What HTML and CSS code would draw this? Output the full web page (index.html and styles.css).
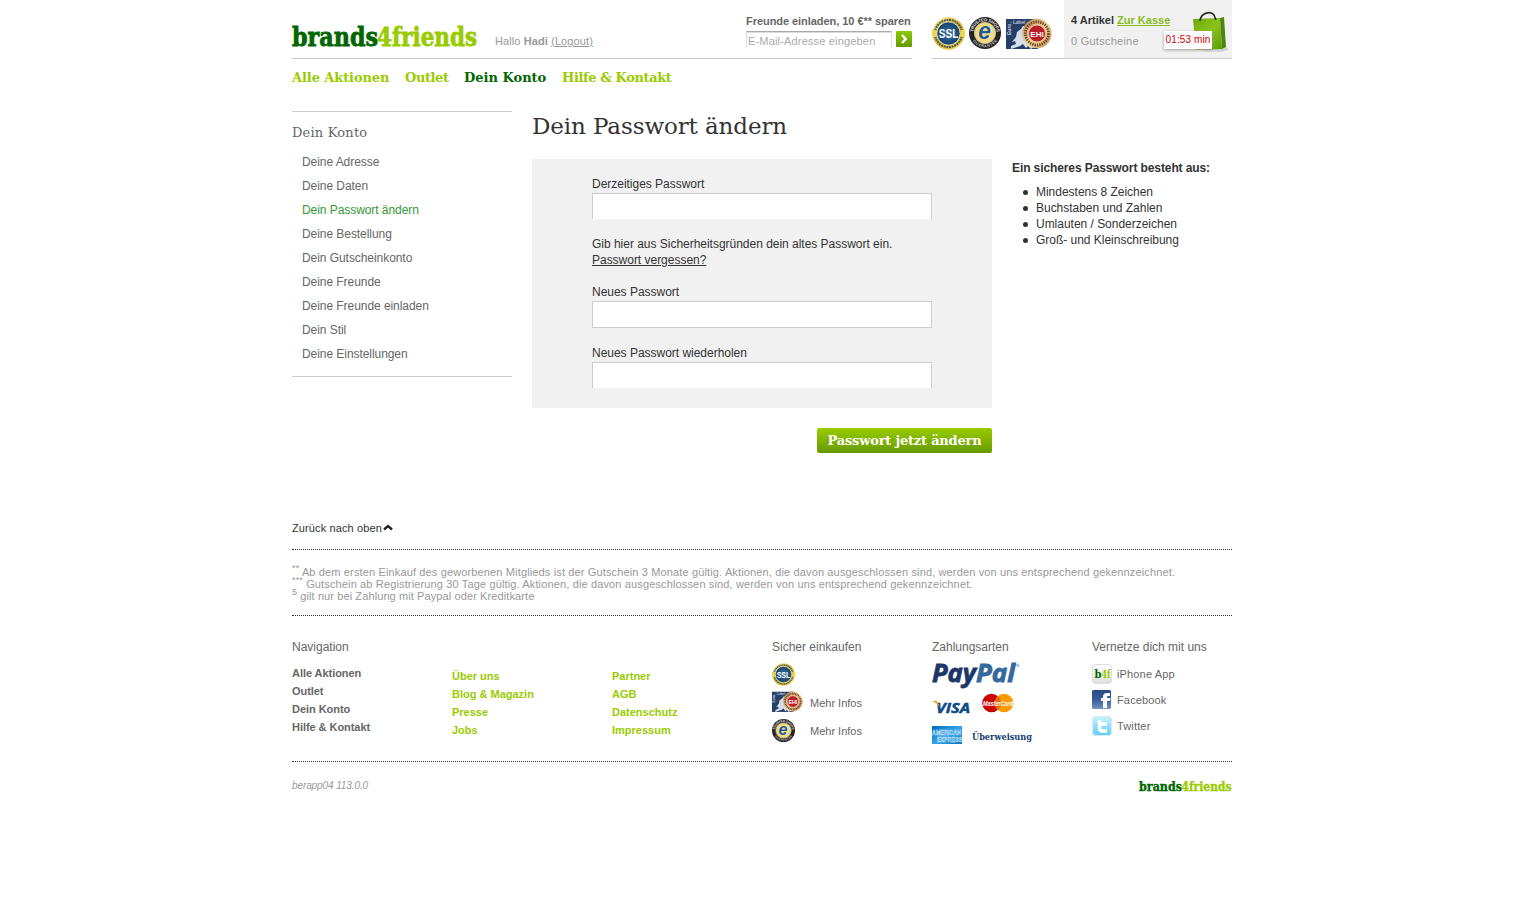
FILE: index.html
```html
<!DOCTYPE html>
<html lang="de">
<head>
<meta charset="utf-8">
<title>brands4friends - Dein Passwort ändern</title>
<link rel="stylesheet" href="styles.css">
</head>
<body>
<svg class="defs" aria-hidden="true">
  <defs>
    <linearGradient id="gold" x1="0" y1="0" x2="1" y2="1"><stop offset="0" stop-color="#fff3b0"/><stop offset=".5" stop-color="#e3b92c"/><stop offset="1" stop-color="#f4d860"/></linearGradient>
    <linearGradient id="copper" x1="0" y1="0" x2="1" y2="1"><stop offset="0" stop-color="#b9783f"/><stop offset=".5" stop-color="#f6dca4"/><stop offset="1" stop-color="#c58a4d"/></linearGradient>
    <radialGradient id="blue"><stop offset="0" stop-color="#3c78a8"/><stop offset="1" stop-color="#153f6b"/></radialGradient>
    <linearGradient id="bagfill" x1="0" y1="0" x2="1" y2="1"><stop offset="0" stop-color="#6fa80c"/><stop offset=".5" stop-color="#8ac41a"/><stop offset="1" stop-color="#5c9a00"/></linearGradient>
    <linearGradient id="amexfill" x1="0" y1="0" x2="1" y2="1"><stop offset="0" stop-color="#0068b8"/><stop offset=".5" stop-color="#35a4ea"/><stop offset="1" stop-color="#0872c0"/></linearGradient>
    <linearGradient id="fbfill" x1="0" y1="0" x2="0" y2="1"><stop offset="0" stop-color="#264a87"/><stop offset=".5" stop-color="#355c9c"/><stop offset="1" stop-color="#7591bf"/></linearGradient>
    <linearGradient id="twfill" x1="0" y1="0" x2="0" y2="1"><stop offset="0" stop-color="#c9f1ff"/><stop offset="1" stop-color="#62cdf5"/></linearGradient>
    <linearGradient id="appfill" x1="0" y1="0" x2="0" y2="1"><stop offset="0" stop-color="#ffffff"/><stop offset="1" stop-color="#dedede"/></linearGradient>
    <symbol id="ssl" viewBox="0 0 32 32">
      <circle cx="16" cy="16" r="15.7" fill="url(#gold)"/>
      <circle cx="16" cy="16" r="13.2" fill="none" stroke="#4a5a52" stroke-width="2" stroke-dasharray="1.9 .7"/>
      <path d="M2 12.5v7M30 12.5v7" stroke="#f3d44f" stroke-width="4"/>
      <circle cx="16" cy="16" r="11.3" fill="url(#blue)" stroke="#f7efbd" stroke-width=".8"/>
      <text x="16" y="20.5" text-anchor="middle" textLength="19" lengthAdjust="spacingAndGlyphs" font-size="13" font-weight="bold" fill="#fff">SSL</text>
    </symbol>
    <symbol id="trusted" viewBox="0 0 32 32">
      <circle cx="16" cy="16" r="16" fill="#242424"/>
      <path id="arcTop" d="M4.2 16a11.8 11.8 0 0 1 23.6 0" fill="none"/>
      <path id="arcBottom" d="M1.6 16a14.4 14.4 0 0 0 28.8 0" fill="none"/>
      <text font-size="4.5" font-weight="bold" fill="#ddd"><textPath href="#arcTop" startOffset="1" textLength="35">TRUSTED SHOPS</textPath></text>
      <text font-size="4" font-weight="bold" fill="#bbb"><textPath href="#arcBottom" startOffset="8" textLength="29">GUARANTEE</textPath></text>
      <circle cx="16" cy="16" r="10.6" fill="#f1dc82" stroke="#c9bd91"/>
      <text x="16.6" y="22" text-anchor="middle" font-size="24" font-style="italic" font-weight="bold" fill="#fff">e</text>
      <text x="15.6" y="21.6" text-anchor="middle" font-size="23" font-style="italic" font-weight="bold" fill="#265a8e">e</text>
    </symbol>
    <symbol id="ehi" viewBox="0 0 46 31">
      <rect y="1" width="32" height="30" fill="#263f69"/>
      <path d="M5 31v-3l5-2-1-3-3 1 4-5 1-5 4-3 2-3 3 0-1 4 4 2 2 5 3 3-3 1 3 6-3 2-3-3-2 2-3-4-3 2-3 1z" fill="#d4dde8"/>
      <text x="4" y="5.5" font-size="5" fill="#dfe5ed">- Label -</text>
      <text transform="translate(4.8 17) rotate(-90)" font-size="5" font-weight="bold" fill="#c3ccdb">Euro</text>
      <circle cx="31" cy="15.5" r="14.7" fill="url(#copper)"/>
      <circle cx="31" cy="15.5" r="11.6" fill="none" stroke="#6b4028" stroke-width="2.8" stroke-dasharray="1.4 1"/>
      <circle cx="31" cy="15.5" r="8.5" fill="#b91e29" stroke="#f2c5a3"/>
      <text x="31" y="18.5" text-anchor="middle" font-size="8" font-weight="bold" fill="#fff">EHI</text>
    </symbol>
    <symbol id="logo" viewBox="0 0 186 26">
      <text y="20.7" font-size="26" textLength="86" lengthAdjust="spacingAndGlyphs" fill="#060" stroke="#060" stroke-width=".8">brands</text>
      <text x="85" y="20.7" font-size="26" textLength="100" lengthAdjust="spacingAndGlyphs" fill="#9c0" stroke="#9c0" stroke-width=".8">4friends</text>
    </symbol>
  </defs>
</svg>
<div class="page">
  <header class="header">
    <div class="header-main">
      <svg class="logo"><use href="#logo"/></svg>
      <div class="greeting">Hallo <b>Hadi</b> <a href="#">(Logout)</a></div>
      <form class="invite">
        <label for="mail">Freunde einladen, 10 €** sparen</label>
        <div class="invite-row">
          <input id="mail" type="text" placeholder="E-Mail-Adresse eingeben">
          <button type="button" aria-label="Senden"><svg width="16" height="16" viewBox="0 0 16 16"><path d="M6 4l3.7 4L6 12" fill="none" stroke="#fff" stroke-width="2.5"/></svg></button>
        </div>
      </form>
    </div>
    <div class="header-side">
      <div class="seals">
        <svg width="33" height="33"><use href="#ssl"/></svg>
        <svg width="32" height="32"><use href="#trusted"/></svg>
        <svg width="46" height="31"><use href="#ehi"/></svg>
      </div>
      <div class="cart">
        <div class="cart-line"><b>4 Artikel</b> <a href="#">Zur Kasse</a></div>
        <div class="cart-coupons">0 Gutscheine</div>
        <svg class="bag" width="36" height="40" viewBox="0 0 36 40"><path d="M33 35l3 3-8 2-20-1z" fill="#d2d2d2"/><path d="M0 7l27-1 2 31-26 1z" fill="url(#bagfill)"/><path d="M27 6l4-1 2 30-4 2z" fill="#4c8510"/><path d="M7 9C8 0 18-1 21 3l2 5" fill="none" stroke="#262b20" stroke-width="1.6"/></svg>
        <div class="timer">01:53 min</div>
      </div>
    </div>
  </header>
  <nav class="nav">
    <a class="n1" href="#">Alle Aktionen</a><a class="n2" href="#">Outlet</a><a class="n3 active" href="#">Dein Konto</a><a class="n4" href="#">Hilfe &amp; Kontakt</a>
  </nav>
  <main class="main">
    <aside class="sidebar">
      <h2>Dein Konto</h2>
      <ul>
        <li>Deine Adresse</li><li>Deine Daten</li><li class="current">Dein Passwort ändern</li><li>Deine Bestellung</li><li>Dein Gutscheinkonto</li><li>Deine Freunde</li><li>Deine Freunde einladen</li><li>Dein Stil</li><li>Deine Einstellungen</li>
      </ul>
    </aside>
    <section class="content">
      <h1>Dein Passwort ändern</h1>
      <form class="panel">
        <label for="old">Derzeitiges Passwort</label>
        <input id="old" type="password" class="open">
        <p>Gib hier aus Sicherheitsgründen dein altes Passwort ein.<br><a href="#">Passwort vergessen?</a></p>
        <label for="new">Neues Passwort</label>
        <input id="new" type="password">
        <label class="repeat" for="again">Neues Passwort wiederholen</label>
        <input id="again" type="password" class="open">
      </form>
      <button class="submit" type="button">Passwort jetzt ändern</button>
    </section>
    <aside class="tips">
      <h3>Ein sicheres Passwort besteht aus:</h3>
      <ul><li>Mindestens 8 Zeichen</li><li>Buchstaben und Zahlen</li><li>Umlauten / Sonderzeichen</li><li>Groß- und Kleinschreibung</li></ul>
    </aside>
  </main>
  <div class="totop">Zurück nach oben<svg width="10" height="7" viewBox="0 0 10 7"><path d="M1 5.5L5 2l4 3.5" fill="none" stroke="#222" stroke-width="2.4"/></svg></div>
  <div class="notes">
    <p class="note1"><sup>**</sup> Ab dem ersten Einkauf des geworbenen Mitglieds ist der Gutschein 3 Monate gültig. Aktionen, die davon ausgeschlossen sind, werden von uns entsprechend gekennzeichnet.</p>
    <p class="note2"><sup>***</sup> Gutschein ab Registrierung 30 Tage gültig. Aktionen, die davon ausgeschlossen sind, werden von uns entsprechend gekennzeichnet.</p>
    <p class="note3"><sup>5</sup> gilt nur bei Zahlung mit Paypal oder Kreditkarte</p>
  </div>
  <footer class="footer">
    <div class="col"><h4>Navigation</h4><ul class="links"><li>Alle Aktionen</li><li>Outlet</li><li>Dein Konto</li><li>Hilfe &amp; Kontakt</li></ul></div>
    <div class="col"><ul class="links green"><li>Über uns</li><li>Blog &amp; Magazin</li><li>Presse</li><li>Jobs</li></ul></div>
    <div class="col"><ul class="links green"><li>Partner</li><li>AGB</li><li>Datenschutz</li><li>Impressum</li></ul></div>
    <div class="col"><h4>Sicher einkaufen</h4>
      <div class="safe"><svg width="23" height="23"><use href="#ssl"/></svg></div>
      <div class="safe"><svg width="31" height="21"><use href="#ehi"/></svg><span>Mehr Infos</span></div>
      <div class="safe"><svg width="23" height="23"><use href="#trusted"/></svg><span>Mehr Infos</span></div>
    </div>
    <div class="col"><h4>Zahlungsarten</h4>
      <svg class="pay" width="104" height="84" viewBox="0 0 104 84">
        <g class="paypal"><text x="0" y="19" textLength="44" lengthAdjust="spacingAndGlyphs" fill="#1b3768" stroke="#1b3768">Pay</text><text x="44" y="19" textLength="39" lengthAdjust="spacingAndGlyphs" fill="#33699c" stroke="#33699c">Pal</text></g>
        <text x="83" y="4" font-size="3" fill="#33699c">TM</text>
        <text class="visa" x="4" y="49.5" textLength="34" lengthAdjust="spacingAndGlyphs">VISA</text><path d="M0 38h5l3 6-3-3z" fill="#f2a82d"/>
        <circle cx="59.5" cy="40" r="9.3" fill="#c00"/><circle cx="72" cy="40" r="9.3" fill="#f90"/><path d="M65.8 33a9.3 9.3 0 0 0 0 14 9.3 9.3 0 0 0 0-14" fill="#dc6d07"/>
        <text x="51" y="42.5" textLength="30" lengthAdjust="spacingAndGlyphs" font-size="7" font-weight="bold" font-style="italic" fill="#fff">MasterCard</text>
        <rect y="63" width="30" height="18" fill="url(#amexfill)"/>
        <g font-size="7" font-weight="bold" fill="#2189d2" stroke="#d4edfb" stroke-width=".5"><text x="0" y="71.5" textLength="29" lengthAdjust="spacingAndGlyphs">AMERICAN</text><text x="5" y="78.5" textLength="25" lengthAdjust="spacingAndGlyphs">EXPRESS</text></g>
        <text class="transfer" x="40" y="77" textLength="60" lengthAdjust="spacingAndGlyphs">Überweisung</text>
      </svg>
    </div>
    <div class="col"><h4>Vernetze dich mit uns</h4>
      <div class="social"><svg width="20" height="20" viewBox="0 0 20 20"><rect x=".5" y=".5" width="19" height="19" rx="3" fill="url(#appfill)" stroke="#ddd"/><g class="app"><text x="2.5" y="14" textLength="7" lengthAdjust="spacingAndGlyphs" fill="#060">b</text><text x="9.5" y="14" textLength="9" lengthAdjust="spacingAndGlyphs" fill="#9c0">4f</text></g></svg>iPhone App</div>
      <div class="social"><svg width="20" height="20" viewBox="0 0 20 20"><rect width="19" height="19" rx="1.5" fill="url(#fbfill)"/><path d="M18 3h-3c-3 0-4 1.5-4 4v1H9v3h2v7h4v-7h3l.5-3H15V7c0-1 .5-1 1.5-1H18z" fill="#fff"/></svg>Facebook</div>
      <div class="social"><svg width="20" height="20" viewBox="0 0 20 20"><rect x=".5" y=".5" width="19" height="19" rx="3" fill="url(#twfill)" stroke="#d5eef8"/><path d="M7.5 4v8c0 2 1 3 3 3H15M7.5 8H15" fill="none" stroke="#fff" stroke-width="3.4"/></svg>Twitter</div>
    </div>
  </footer>
  <div class="bottom"><em>berapp04 113.0.0</em><svg class="logo-small"><use href="#logo"/></svg></div>
</div>
</body>
</html>
```

FILE: styles.css
```css
* { box-sizing: border-box; }
body { margin: 0; background: #fff; color: #333; font: 12px/16px "Liberation Sans", Arial, sans-serif; letter-spacing: -.02px; }
h1, h2, h3, h4, p, ul { margin: 0; padding: 0; font-weight: normal; }
ul { list-style: none; }
a { color: inherit; }
svg { display: block; overflow: visible; flex: none; }
svg text { letter-spacing: 0; }
.defs { position: absolute; width: 0; height: 0; }
.page { width: 940px; margin: 0 auto; }

.header { display: flex; gap: 20px; height: 59px; }
.header-main { display: flex; width: 620px; border-bottom: 1px solid #ccc; }
.logo { width: 186px; height: 26px; margin-top: 25px; }
#logo text, .app { font-family: "DejaVu Serif", serif; font-weight: bold; }
.greeting { margin: 33px 0 0 17px; color: #999; font-size: 11px; letter-spacing: .1px; white-space: nowrap; }
.invite { width: 166px; margin: 13px 0 0 auto; }
.invite label { display: block; height: 18px; color: #666; font-size: 11px; font-weight: bold; letter-spacing: -.05px; white-space: nowrap; }
.invite-row { display: flex; justify-content: space-between; }
.invite input { width: 146px; height: 16px; padding: 2px 1px 0; border: 1px solid #ddd; border-top: 1px solid #aaa; border-bottom: 0; box-shadow: inset 0 1px #ddd; font: 11px/13px "Liberation Sans", sans-serif; letter-spacing: .17px; }
.invite input::placeholder { color: #aaa; }
.invite button { width: 16px; height: 16px; padding: 0; border: 0; border-radius: 1px; background: linear-gradient(#8c0, #690); }
.header-side { display: flex; width: 300px; border-bottom: 1px solid #ccc; }
.seals { display: flex; gap: 4px; width: 132px; padding-top: 17px; }
.seals svg:last-child { margin: 1px 0 0 1px; }
.cart { position: relative; width: 168px; padding: 12px 0 0 7px; background: #f1f1f1; font-size: 11px; }
.cart-line { letter-spacing: 0; }
.cart-line a { color: #8b2; font-weight: bold; }
.cart-coupons { margin-top: 5px; color: #999; letter-spacing: .25px; }
.bag { position: absolute; top: 12px; left: 129px; }
.timer { position: absolute; top: 31px; left: 100px; width: 48px; height: 18px; background: #fff; box-shadow: 0 1px 3px #999; color: #c00; font-size: 10px; line-height: 18px; text-align: center; letter-spacing: .1px; white-space: nowrap; }

.nav { display: flex; gap: 16px; height: 52px; padding-top: 9px; color: #9c0; font: bold 13px/20px "DejaVu Serif", serif; white-space: nowrap; }
.nav a { text-decoration: none; }
.nav .active { color: #060; }
.n1 { width: 97px; letter-spacing: -.1px; }
.n2 { width: 43px; letter-spacing: -.4px; }
.n3 { width: 82px; letter-spacing: 0; }
.n4 { letter-spacing: -.4px; }

.main { display: flex; gap: 20px; height: 408px; }
.sidebar { width: 220px; height: 266px; padding-top: 11px; border: solid #ccc; border-width: 1px 0; color: #666; }
.sidebar h2 { height: 27px; font: 13px/20px "DejaVu Serif", serif; letter-spacing: .2px; }
.sidebar li { padding-left: 10px; line-height: 24px; letter-spacing: -.06px; }
.sidebar .current { color: #393; }
.content { width: 460px; }
.content h1 { height: 48px; font: 23px/30px "DejaVu Serif", serif; letter-spacing: -.1px; white-space: nowrap; }
.panel { height: 249px; padding: 17px 60px 0; background: #f1f1f1; }
.panel label { display: block; height: 17px; }
.panel input { display: block; width: 340px; height: 27px; border: 1px solid #ccc; background: #fff; }
.panel input.open { height: 26px; border-bottom: 0; }
.panel p { height: 65px; padding-top: 17px; }
.panel .repeat { height: 34px; padding-top: 17px; }
.submit { display: block; width: 175px; height: 25px; margin: 20px 0 0 auto; padding: 1px 0 0; border: 0; border-radius: 2px; background: linear-gradient(#9c0, #690); color: #fff; font: bold 13px/24px "DejaVu Serif", serif; letter-spacing: -.2px; white-space: nowrap; }
.tips { padding-top: 49px; white-space: nowrap; }
.tips h3 { font-size: 12px; font-weight: bold; letter-spacing: -.1px; }
.tips ul { margin-top: 8px; padding-left: 11px; }
.tips li { display: flex; align-items: center; gap: 8px; }
.tips li::before { content: ""; width: 5px; height: 5px; border-radius: 50%; background: #333; }

.totop { display: flex; gap: 1px; align-items: center; height: 31px; padding-bottom: 13px; border-bottom: 1px dotted #333; font-size: 11px; letter-spacing: .12px; }
.notes { height: 66px; padding-top: 16px; border-bottom: 1px dotted #333; color: #999; font-size: 11px; line-height: 12px; white-space: nowrap; }
.notes sup { font-size: 9px; line-height: 0; }
.note1, .note2 { letter-spacing: .14px; }
.note3 { letter-spacing: .1px; }

.footer { display: grid; grid-template-columns: repeat(6, 160px); height: 146px; padding-top: 23px; border-bottom: 1px dotted #333; color: #666; white-space: nowrap; }
.footer h4 { height: 25px; font-size: 12px; letter-spacing: 0; }
.links { font-size: 11px; font-weight: bold; line-height: 18px; letter-spacing: -.05px; }
.green { padding-top: 28px; color: #9c0; letter-spacing: 0; }
.safe { display: flex; height: 28px; font-size: 11px; letter-spacing: 0; }
.footer h4 + .safe { margin-top: -1px; }
.safe span { margin: 4px 0 0 auto; width: 122px; }
.pay { margin-top: -1px; }
.paypal { font: italic bold 25px "Open Sans", sans-serif; stroke-width: .8px; }
.visa { font: italic bold 15px "Open Sans", sans-serif; fill: #0c4a86; stroke: #0c4a86; stroke-width: .5px; }
.transfer { font: bold 9.5px "DejaVu Serif", serif; fill: #153d70; }
.social { display: flex; align-items: center; gap: 5px; height: 20px; margin-bottom: 6px; font-size: 11px; letter-spacing: .15px; }
.app { font-size: 11px; }
.bottom { display: flex; justify-content: space-between; padding-top: 16px; color: #999; font-size: 10px; letter-spacing: -.1px; }
.logo-small { width: 93px; height: 13px; margin-top: 3px; }
```
